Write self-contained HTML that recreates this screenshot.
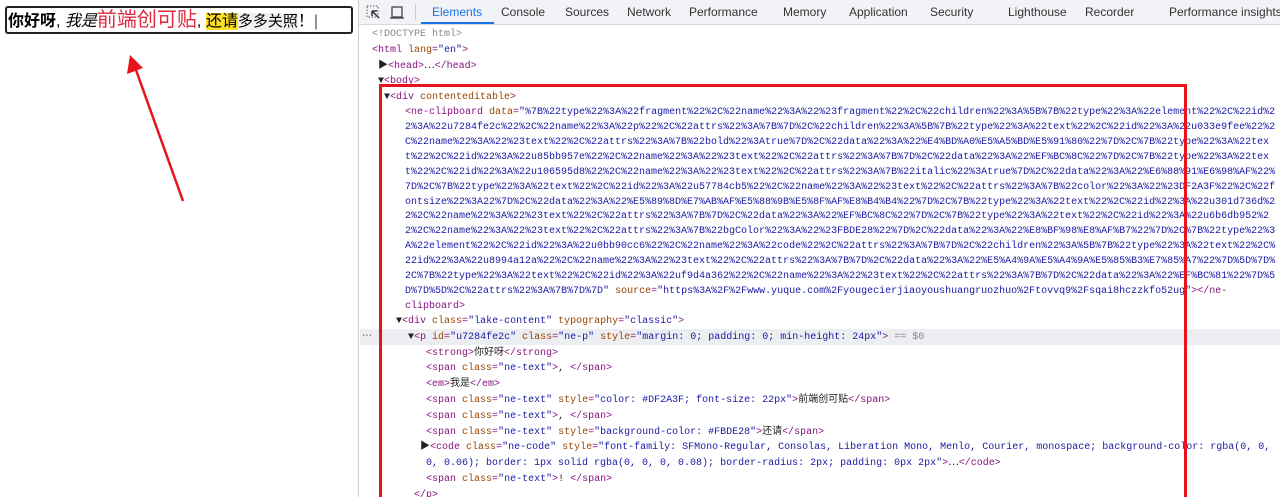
<!DOCTYPE html>
<html><head><meta charset="utf-8"><style>
html,body{margin:0;width:1280px;height:497px;overflow:hidden;background:#fff;position:relative;font-family:"Liberation Sans","Noto Sans CJK SC",sans-serif}
#left{position:absolute;left:0;top:0;width:358px;height:497px;border-right:1px solid #d0d0d0}
#ed{position:absolute;left:5px;top:6px;width:343px;height:24px;border:2px solid #222;border-radius:3px;font-size:16px;line-height:24px;white-space:nowrap;padding-left:1px}
#tb{position:absolute;left:359px;top:0;width:921px;height:24px;background:#f1f3f6;border-bottom:1px solid #d6d9de;font-size:12px;color:#333}
#tb span{position:absolute;top:5px;white-space:nowrap}
.code{position:absolute;left:0;font-family:"Liberation Mono","Noto Sans CJK SC",monospace;font-size:10px;white-space:pre;color:#222}
.t{color:#881280}.a{color:#994500}.v{color:#1a1aa6}.g{color:#888}
</style></head><body>
<div id="left">
<div id="ed"><b>你好呀</b>, <i>我是</i><span style="color:#DF2A3F;font-size:20px">前端创可贴</span>, <span style="background:#FBDE28">还请</span><span style="background:rgba(0,0,0,.06);font-size:15px">多多关照</span>！<span style="color:#555">|</span></div>
<svg style="position:absolute;left:0;top:0" width="358" height="497"><line x1="183" y1="201" x2="136" y2="70" stroke="#e8141b" stroke-width="2.5"/><polygon points="130,55 127,74 143,68" fill="#e8141b"/></svg>
</div>
<div id="tb">
<svg style="position:absolute;left:7px;top:5px" width="40" height="16"><rect x="1" y="1" width="11" height="11" fill="none" stroke="#555" stroke-dasharray="1.5 1.5"/><path d="M6 6 L13 13 M6 6 L6 11 M6 6 L11 6" stroke="#333" stroke-width="1.5" fill="none"/><rect x="26" y="2" width="10" height="10" fill="none" stroke="#444" stroke-width="1.3"/><path d="M24 13 H38" stroke="#444" stroke-width="1.3"/></svg>
<div style="position:absolute;left:56px;top:4px;width:1px;height:16px;background:#ccc"></div>
<span style="left:73px;color:#1a73e8">Elements</span>
<div style="position:absolute;left:62px;top:22px;width:73px;height:2px;background:#1a73e8"></div>
<span style="left:142px">Console</span><span style="left:206px">Sources</span><span style="left:268px">Network</span><span style="left:330px">Performance</span><span style="left:424px">Memory</span><span style="left:490px">Application</span><span style="left:571px">Security</span><span style="left:649px">Lighthouse</span><span style="left:726px">Recorder</span><span style="left:810px">Performance insights</span>
</div>
<div style="position:absolute;left:360px;top:329px;width:920px;height:16px;background:#eceef1"></div>
<div class="code" style="left:362px;top:330px;color:#555;line-height:15px">⋯</div>
<div class="code" style="left:372px;top:27px;line-height:15.8px"><span class="g">&lt;!DOCTYPE html&gt;</span>
<span class="t">&lt;html </span><span class="a">lang</span><span class="t">=</span><span class="v">"en"</span><span class="t">&gt;</span>
 ▶<span class="t">&lt;head&gt;</span><span class="v">⋯</span><span class="t">&lt;/head&gt;</span>
 ▼<span class="t">&lt;body&gt;</span>
  ▼<span class="t">&lt;div </span><span class="a">contenteditable</span><span class="t">&gt;</span></div>
<div class="code" style="left:405px;top:106px;line-height:14.92px"><span class="t">&lt;ne-clipboard </span><span class="a">data</span><span class="t">=</span><span class="v">"%7B%22type%22%3A%22fragment%22%2C%22name%22%3A%22%23fragment%22%2C%22children%22%3A%5B%7B%22type%22%3A%22element%22%2C%22id%2
2%3A%22u7284fe2c%22%2C%22name%22%3A%22p%22%2C%22attrs%22%3A%7B%7D%2C%22children%22%3A%5B%7B%22type%22%3A%22text%22%2C%22id%22%3A%22u033e9fee%22%2
C%22name%22%3A%22%23text%22%2C%22attrs%22%3A%7B%22bold%22%3Atrue%7D%2C%22data%22%3A%22%E4%BD%A0%E5%A5%BD%E5%91%80%22%7D%2C%7B%22type%22%3A%22tex
t%22%2C%22id%22%3A%22u85bb957e%22%2C%22name%22%3A%22%23text%22%2C%22attrs%22%3A%7B%7D%2C%22data%22%3A%22%EF%BC%8C%22%7D%2C%7B%22type%22%3A%22tex
t%22%2C%22id%22%3A%22u106595d8%22%2C%22name%22%3A%22%23text%22%2C%22attrs%22%3A%7B%22italic%22%3Atrue%7D%2C%22data%22%3A%22%E6%88%91%E6%98%AF%22%
7D%2C%7B%22type%22%3A%22text%22%2C%22id%22%3A%22u57784cb5%22%2C%22name%22%3A%22%23text%22%2C%22attrs%22%3A%7B%22color%22%3A%22%23DF2A3F%22%2C%22f
ontsize%22%3A22%7D%2C%22data%22%3A%22%E5%89%8D%E7%AB%AF%E5%88%9B%E5%8F%AF%E8%B4%B4%22%7D%2C%7B%22type%22%3A%22text%22%2C%22id%22%3A%22u301d736d%2
2%2C%22name%22%3A%22%23text%22%2C%22attrs%22%3A%7B%7D%2C%22data%22%3A%22%EF%BC%8C%22%7D%2C%7B%22type%22%3A%22text%22%2C%22id%22%3A%22u6b6db952%2
2%2C%22name%22%3A%22%23text%22%2C%22attrs%22%3A%7B%22bgColor%22%3A%22%23FBDE28%22%7D%2C%22data%22%3A%22%E8%BF%98%E8%AF%B7%22%7D%2C%7B%22type%22%3
A%22element%22%2C%22id%22%3A%22u0bb90cc6%22%2C%22name%22%3A%22code%22%2C%22attrs%22%3A%7B%7D%2C%22children%22%3A%5B%7B%22type%22%3A%22text%22%2C%
22id%22%3A%22u8994a12a%22%2C%22name%22%3A%22%23text%22%2C%22attrs%22%3A%7B%7D%2C%22data%22%3A%22%E5%A4%9A%E5%A4%9A%E5%85%B3%E7%85%A7%22%7D%5D%7D%
2C%7B%22type%22%3A%22text%22%2C%22id%22%3A%22uf9d4a362%22%2C%22name%22%3A%22%23text%22%2C%22attrs%22%3A%7B%7D%2C%22data%22%3A%22%EF%BC%81%22%7D%5
D%7D%5D%2C%22attrs%22%3A%7B%7D%7D"</span> <span class="a">source</span><span class="t">=</span><span class="v">"https%3A%2F%2Fwww.yuque.com%2Fyougecierjiaoyoushuangruozhuo%2Ftovvq9%2Fsqai8hczzkfo52ug"</span><span class="t">&gt;&lt;/ne-</span>
<span class="t">clipboard&gt;</span></div>
<div class="code" style="left:396px;top:314px;line-height:15.8px;height:183px;overflow:hidden">▼<span class="t">&lt;div </span><span class="a">class</span><span class="t">=</span><span class="v">"lake-content"</span> <span class="a">typography</span><span class="t">=</span><span class="v">"classic"</span><span class="t">&gt;</span>
  ▼<span class="t">&lt;p </span><span class="a">id</span><span class="t">=</span><span class="v">"u7284fe2c"</span> <span class="a">class</span><span class="t">=</span><span class="v">"ne-p"</span> <span class="a">style</span><span class="t">=</span><span class="v">"margin: 0; padding: 0; min-height: 24px"</span><span class="t">&gt;</span> <span class="g">== $0</span>
     <span class="t">&lt;strong&gt;</span>你好呀<span class="t">&lt;/strong&gt;</span>
     <span class="t">&lt;span </span><span class="a">class</span><span class="t">=</span><span class="v">"ne-text"</span><span class="t">&gt;</span>, <span class="t">&lt;/span&gt;</span>
     <span class="t">&lt;em&gt;</span>我是<span class="t">&lt;/em&gt;</span>
     <span class="t">&lt;span </span><span class="a">class</span><span class="t">=</span><span class="v">"ne-text"</span> <span class="a">style</span><span class="t">=</span><span class="v">"color: #DF2A3F; font-size: 22px"</span><span class="t">&gt;</span>前端创可贴<span class="t">&lt;/span&gt;</span>
     <span class="t">&lt;span </span><span class="a">class</span><span class="t">=</span><span class="v">"ne-text"</span><span class="t">&gt;</span>, <span class="t">&lt;/span&gt;</span>
     <span class="t">&lt;span </span><span class="a">class</span><span class="t">=</span><span class="v">"ne-text"</span> <span class="a">style</span><span class="t">=</span><span class="v">"background-color: #FBDE28"</span><span class="t">&gt;</span>还请<span class="t">&lt;/span&gt;</span>
    ▶<span class="t">&lt;code </span><span class="a">class</span><span class="t">=</span><span class="v">"ne-code"</span> <span class="a">style</span><span class="t">=</span><span class="v">"font-family: SFMono-Regular, Consolas, Liberation Mono, Menlo, Courier, monospace; background-color: rgba(0, 0,</span>
     <span class="v">0, 0.06); border: 1px solid rgba(0, 0, 0, 0.08); border-radius: 2px; padding: 0px 2px"</span><span class="t">&gt;</span><span class="v">⋯</span><span class="t">&lt;/code&gt;</span>
     <span class="t">&lt;span </span><span class="a">class</span><span class="t">=</span><span class="v">"ne-text"</span><span class="t">&gt;</span>! <span class="t">&lt;/span&gt;</span>
   <span class="t">&lt;/p&gt;</span></div>
<div style="position:absolute;left:379px;top:84px;width:802px;height:413px;border:3px solid #e8141b;border-bottom:none"></div>
</body></html>
